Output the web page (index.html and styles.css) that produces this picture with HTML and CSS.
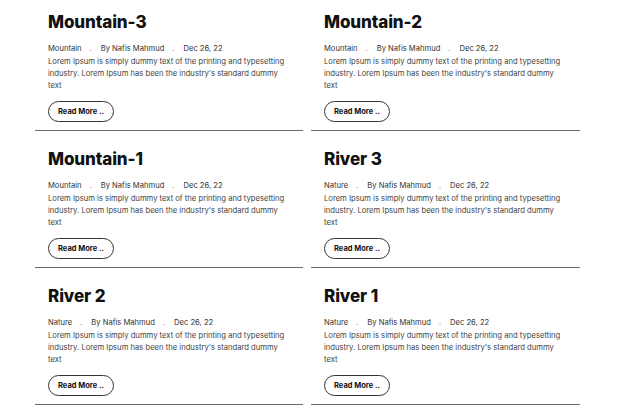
FILE: index.html
```html
<!DOCTYPE html>
<html lang="en">
<head>
<meta charset="utf-8">
<title>Posts</title>
<link rel="stylesheet" href="styles.css">
</head>
<body>
<main class="posts">
  <article class="post">
    <h2 class="post-title">Mountain-3</h2>
    <div class="meta"><span>Mountain</span><span class="dot">.</span><span>By Nafis Mahmud</span><span class="dot">.</span><span>Dec 26, 22</span></div>
    <p class="excerpt">Lorem Ipsum is simply dummy text of the printing and typesetting industry. Lorem Ipsum has been the industry's standard dummy text</p>
    <a class="btn" href="#">Read More ..</a>
  </article>
  <article class="post">
    <h2 class="post-title">Mountain-2</h2>
    <div class="meta"><span>Mountain</span><span class="dot">.</span><span>By Nafis Mahmud</span><span class="dot">.</span><span>Dec 26, 22</span></div>
    <p class="excerpt">Lorem Ipsum is simply dummy text of the printing and typesetting industry. Lorem Ipsum has been the industry's standard dummy text</p>
    <a class="btn" href="#">Read More ..</a>
  </article>
  <article class="post">
    <h2 class="post-title">Mountain-1</h2>
    <div class="meta"><span>Mountain</span><span class="dot">.</span><span>By Nafis Mahmud</span><span class="dot">.</span><span>Dec 26, 22</span></div>
    <p class="excerpt">Lorem Ipsum is simply dummy text of the printing and typesetting industry. Lorem Ipsum has been the industry's standard dummy text</p>
    <a class="btn" href="#">Read More ..</a>
  </article>
  <article class="post">
    <h2 class="post-title">River 3</h2>
    <div class="meta"><span>Nature</span><span class="dot">.</span><span>By Nafis Mahmud</span><span class="dot">.</span><span>Dec 26, 22</span></div>
    <p class="excerpt">Lorem Ipsum is simply dummy text of the printing and typesetting industry. Lorem Ipsum has been the industry's standard dummy text</p>
    <a class="btn" href="#">Read More ..</a>
  </article>
  <article class="post">
    <h2 class="post-title">River 2</h2>
    <div class="meta"><span>Nature</span><span class="dot">.</span><span>By Nafis Mahmud</span><span class="dot">.</span><span>Dec 26, 22</span></div>
    <p class="excerpt">Lorem Ipsum is simply dummy text of the printing and typesetting industry. Lorem Ipsum has been the industry's standard dummy text</p>
    <a class="btn" href="#">Read More ..</a>
  </article>
  <article class="post">
    <h2 class="post-title">River 1</h2>
    <div class="meta"><span>Nature</span><span class="dot">.</span><span>By Nafis Mahmud</span><span class="dot">.</span><span>Dec 26, 22</span></div>
    <p class="excerpt">Lorem Ipsum is simply dummy text of the printing and typesetting industry. Lorem Ipsum has been the industry's standard dummy text</p>
    <a class="btn" href="#">Read More ..</a>
  </article>
</main>
</body>
</html>
```
FILE: styles.css
```css
* { box-sizing: border-box; }
html, body { margin: 0; padding: 0; background: #fff; }
body {
  font-family: "Inter", "Noto Sans", sans-serif;
  color: #333;
}
.posts {
  display: grid;
  grid-template-columns: 268px 269px;
  column-gap: 8px;
  padding-left: 35px;
  margin-top: -6px;
}
.post {
  height: 137px;
  padding: 17px 13px 0 13px;
  border-bottom: 1px solid #6c6b78;
  display: flex;
  flex-direction: column;
  align-items: flex-start;
}
.post-title {
  margin: 0;
  font-size: 17px;
  line-height: 22px;
  font-weight: 800;
  letter-spacing: -0.1px;
  color: #111;
}
.meta {
  margin-top: 11px;
  display: flex;
  font-size: 7.6px;
  line-height: 10px;
  color: #333;
}
.dot { color: #e0475a; margin: 0 9px 0 8px; }
.excerpt {
  margin: 2px 0 0 0;
  font-size: 7.65px;
  line-height: 12px;
  color: #444;
  width: 241px;
}
.btn {
  margin-top: 9px;
  height: 21px;
  padding: 0 9px;
  display: inline-flex;
  align-items: center;
  border: 1px solid #333;
  border-radius: 11px;
  font-size: 7.5px;
  font-weight: 700;
  color: #111;
  text-decoration: none;
}
```
